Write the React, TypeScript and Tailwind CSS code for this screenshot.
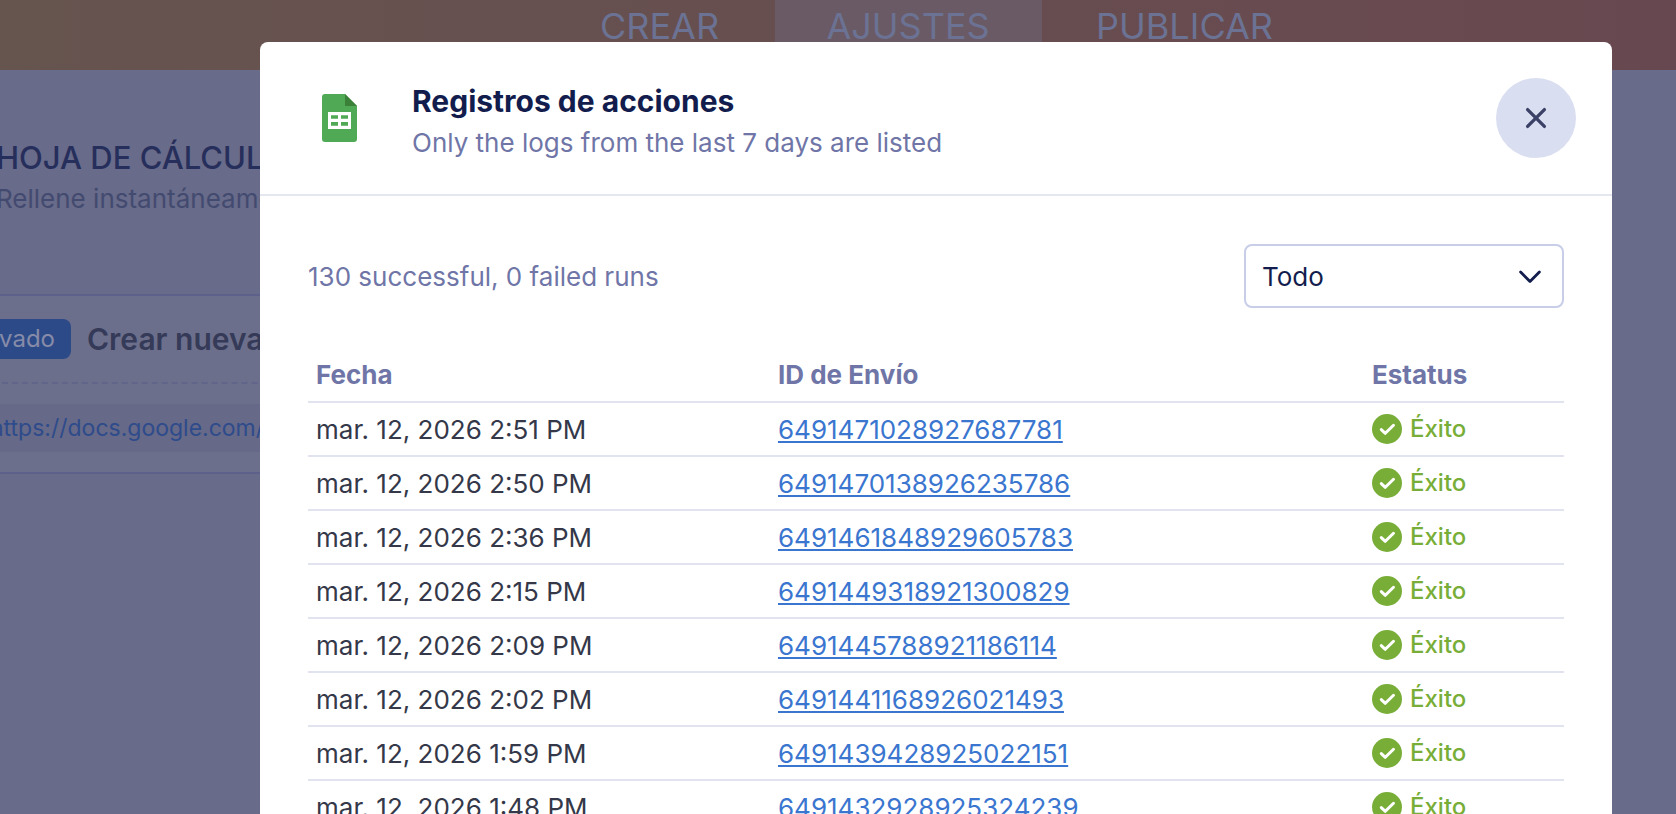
import React, { useState } from 'react';

interface LogEntry {
  id: string;
  date: string;
}

const logs: LogEntry[] = [
  { id: '6491471028927687781', date: 'mar. 12, 2026 2:51 PM' },
  { id: '6491470138926235786', date: 'mar. 12, 2026 2:50 PM' },
  { id: '6491461848929605783', date: 'mar. 12, 2026 2:36 PM' },
  { id: '6491449318921300829', date: 'mar. 12, 2026 2:15 PM' },
  { id: '6491445788921186114', date: 'mar. 12, 2026 2:09 PM' },
  { id: '6491441168926021493', date: 'mar. 12, 2026 2:02 PM' },
  { id: '6491439428925022151', date: 'mar. 12, 2026 1:59 PM' },
  { id: '6491432928925324239', date: 'mar. 12, 2026 1:48 PM' },
];

function SheetsIcon() {
  return (
    <svg className="h-12 w-9 shrink-0" viewBox="0 0 36 48" aria-hidden="true">
      <path d="M3 0h20l12 12v33a3 3 0 0 1-3 3H3a3 3 0 0 1-3-3V3a3 3 0 0 1 3-3z" fill="#50a955" />
      <path d="M23 0l12 12H23z" fill="#3b8039" />
      <path
        d="M6 18h23v17H6zM9 21.2v3.6h7v-3.6zM19 21.2v3.6h7v-3.6zM9 28v3.8h7V28zM19 28v3.8h7V28z"
        fill="#fff"
        fillRule="evenodd"
      />
    </svg>
  );
}

function StatusIcon() {
  return (
    <svg className="h-[30px] w-[30px]" viewBox="0 0 30 30" aria-hidden="true">
      <circle cx="15" cy="15" r="15" fill="#78ae38" />
      <path
        d="M9.3 15.6l4 3.7 8.2-8"
        fill="none"
        stroke="#fff"
        strokeWidth="3"
        strokeLinecap="round"
        strokeLinejoin="round"
      />
    </svg>
  );
}

function Backdrop() {
  return (
    <div className="min-h-screen overflow-hidden bg-[#686b89]">
      <nav className="flex h-[70px] justify-center bg-linear-to-r from-[#66544f] to-[#684850] pl-49 text-4xl text-[#6b7293]">
        <a href="#crear" className="w-[230px] pt-1.5 text-center">CREAR</a>
        <a href="#ajustes" className="w-[267px] bg-[#6a5a65] pt-1.5 text-center">AJUSTES</a>
        <a href="#publicar" className="w-[286px] pt-1.5 text-center">PUBLICAR</a>
      </nav>
      <main className="mr-32 -ml-[100px]">
        <div className="h-56 pt-[66px] pl-24">
          <h1 className="text-[31px] leading-[44px] font-medium text-[#262e5c]">HOJA DE CÁLCULO</h1>
          <p className="text-[26px] leading-[38px] text-[#434a70]">Rellene instantáneamente</p>
        </div>
        <section className="border-2 border-[#5d608a] bg-[#6c6f8b]">
          <div className="flex h-[88px] items-center gap-4 border-b-2 border-dashed border-[#61658a]">
            <span className="flex h-10 w-[169px] items-center justify-end rounded-lg bg-[#2d4a88] pr-4 text-2xl text-[#868ba8]">
              Privado
            </span>
            <h2 className="text-[30px] font-semibold text-[#343a57]">Crear nueva</h2>
          </div>
          <div className="py-5">
            <div className="flex h-12 items-center bg-[#666988] pl-22 text-[23px] text-[#2e4b8b]">
              <a href="https://docs.google.com/">https://docs.google.com/</a>
            </div>
          </div>
        </section>
      </main>
    </div>
  );
}

export default function App() {
  const [filter, setFilter] = useState('all');

  return (
    <div className="relative h-screen overflow-hidden font-['Inter',sans-serif]">
      <Backdrop />

      {/* Logs dialog */}
      <div className="absolute inset-0 overflow-hidden pt-[42px] pr-16 pl-[260px]">
        <div role="dialog" aria-labelledby="logs-title" className="min-h-full rounded-t-lg bg-white">
          <header className="flex h-[154px] items-center border-b-2 border-[#e5e7f0] pr-9 pl-[62px]">
            <SheetsIcon />
            <div className="ml-[54px] flex-1 pt-2">
              <h2 id="logs-title" className="text-[30px] leading-[42px] font-bold text-[#131d4d]">
                Registros de acciones
              </h2>
              <p className="text-[26px] leading-[42px] text-[#6f76a7]">
                Only the logs from the last 7 days are listed
              </p>
            </div>
            <button
              type="button"
              aria-label="Cerrar"
              className="flex h-20 w-20 items-center justify-center rounded-full bg-[#dadef1]"
            >
              <svg className="h-6 w-6" viewBox="0 0 24 24" fill="none" stroke="#3b4067" strokeWidth="3.3" strokeLinecap="round">
                <path d="M3.6 3.6l16.8 16.8M20.4 3.6l-16.8 16.8" />
              </svg>
            </button>
          </header>

          <div className="px-12 pt-12">
            <div className="flex items-center justify-between">
              <p className="text-[26px] text-[#6f76a7]">130 successful, 0 failed runs</p>
              <div className="relative">
                <select
                  aria-label="Filtro"
                  value={filter}
                  onChange={(e) => setFilter(e.target.value)}
                  className="h-16 w-80 appearance-none rounded-lg border-2 border-[#c8cee8] bg-white pl-4 text-[26px] text-[#131d4d]"
                >
                  <option value="all">Todo</option>
                  <option value="success">Éxito</option>
                  <option value="failed">Fallido</option>
                </select>
                <svg
                  className="pointer-events-none absolute top-5 right-[22px] h-6 w-6"
                  viewBox="0 0 24 24"
                  fill="none"
                  stroke="#131d4d"
                  strokeWidth="2.8"
                  strokeLinecap="round"
                  strokeLinejoin="round"
                >
                  <path d="M2.6 8l9.4 9.4 9.4-9.4" />
                </svg>
              </div>
            </div>

            <table className="mt-10 w-full table-fixed text-left text-[26px]">
              <thead>
                <tr className="h-[54px] border-b-2 border-[#e2e3f0] text-[#6f76a7]">
                  <th className="w-[462px] px-2 font-bold">Fecha</th>
                  <th className="px-2 font-bold">ID de Envío</th>
                  <th className="w-[200px] px-2 font-bold">Estatus</th>
                </tr>
              </thead>
              <tbody>
                {logs.map((log) => (
                  <tr key={log.id} className="h-[54px] border-b-2 border-[#e2e3f0]">
                    <td className="px-2 text-[#343849]">{log.date}</td>
                    <td className="px-2">
                      <a href={`#${log.id}`} className="text-[#3a76cf] underline decoration-2 underline-offset-2">
                        {log.id}
                      </a>
                    </td>
                    <td className="px-2">
                      <span className="flex items-center gap-2 text-2xl font-medium text-[#78ae38]">
                        <StatusIcon />
                        Éxito
                      </span>
                    </td>
                  </tr>
                ))}
              </tbody>
            </table>
          </div>
        </div>
      </div>
    </div>
  );
}
